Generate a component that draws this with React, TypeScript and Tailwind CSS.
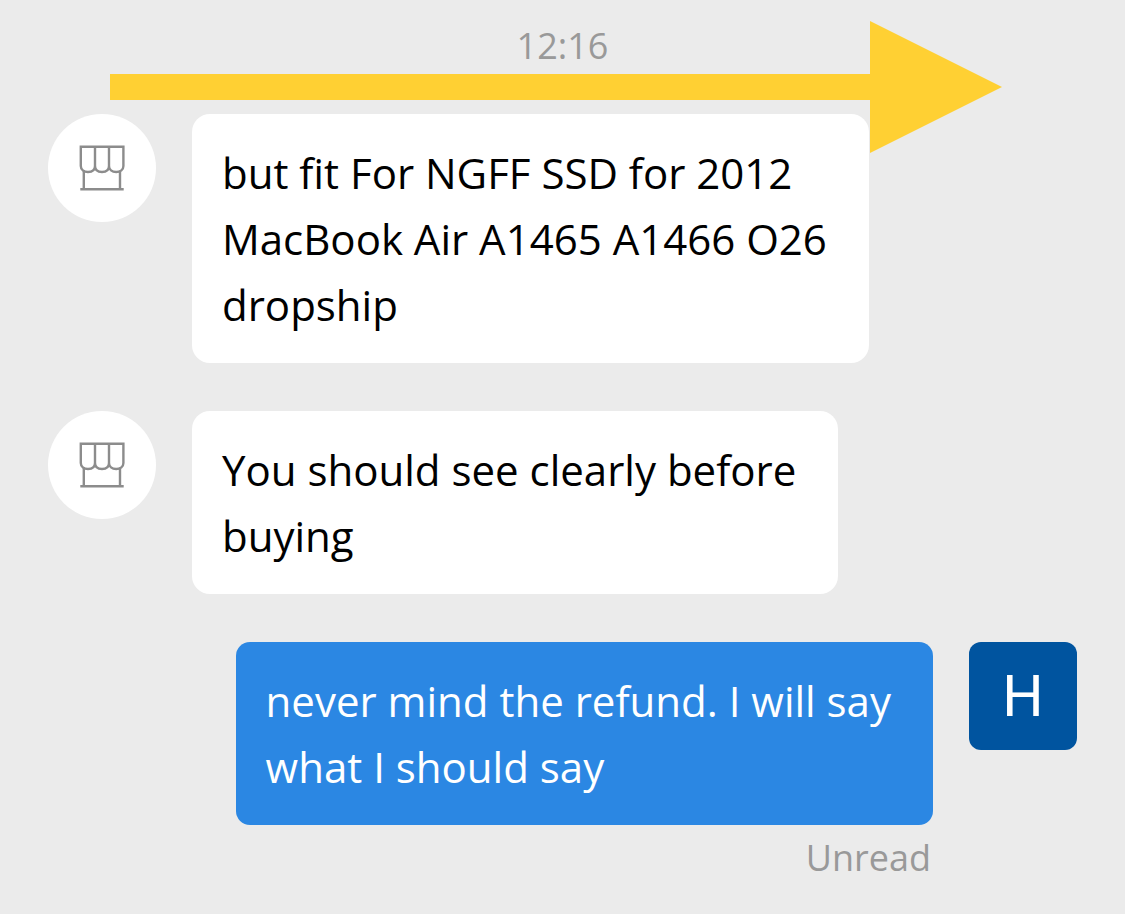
type Message = {
    id: number;
    sender: "store" | "me";
    text: string;
};

const messages: Message[] = [
    { id: 1, sender: "store", text: "but fit For NGFF SSD for 2012\nMacBook Air A1465 A1466 O26\ndropship" },
    { id: 2, sender: "store", text: "You should see clearly before\nbuying" },
    { id: 3, sender: "me", text: "never mind the refund. I will say\nwhat I should say" },
];

function StoreAvatar() {
    return (
        <div className="flex size-27 shrink-0 items-center justify-center rounded-full bg-white">
            <svg viewBox="0 0 48 48" className="size-12" fill="none" stroke="#8c8c8c" strokeWidth="2.4" aria-hidden="true">
                <path d="M2.8 2.7h42.6v19.3c0 3.8-3 6-7.2 6s-7.2-2.2-7.2-6c0 3.8-2.8 6-7 6s-7-2.2-7-6c0 3.8-2.8 6-7 6s-7.2-2.2-7.2-6z" />
                <path d="M17 2.7v19.3M31 2.7v19.3M5.8 26.5v18.5M42 26.5v18.5M2.3 45.3h43.4" />
            </svg>
        </div>
    );
}

function Arrow() {
    return (
        <svg viewBox="0 0 892 132" className="absolute left-[110px] top-[21px] h-[132px] w-[892px]" fill="#ffd033" aria-hidden="true">
            <path d="M0 53h760V0l132 66l-132 66V79H0z" />
        </svg>
    );
}

function MessageRow({ message }: { message: Message }) {
    if (message.sender === "store") {
        return (
            <div className="flex items-start gap-9">
                <StoreAvatar />
                <p className="whitespace-pre-line rounded-[18px] bg-white pb-[25px] pl-[30px] pr-[42px] pt-[26px] text-black">
                    {message.text}
                </p>
            </div>
        );
    }

    return (
        <div className="flex items-start justify-end gap-9">
            <div>
                <p className="whitespace-pre-line rounded-[14px] bg-[#2b87e3] pb-[25px] pl-[30px] pr-[42px] pt-[26px] text-white">
                    {message.text}
                </p>
                <div className="pr-0.5 text-right text-[36px] text-[#999999]">Unread</div>
            </div>
            <div className="flex size-27 shrink-0 items-center justify-center rounded-xl bg-[#00549f] font-[Roboto,sans-serif] text-[58px] text-white">
                H
            </div>
        </div>
    );
}

export default function App() {
    return (
        <main className="relative min-h-screen bg-[#ebebeb] px-12 pt-[13px] font-['Open_Sans',sans-serif] text-[42px] leading-[66px]">
            <time className="block pb-[35px] text-center text-[36px] text-[#999999]">12:16</time>
            <div className="flex flex-col gap-12">
                {messages.map((message) => (
                    <MessageRow key={message.id} message={message} />
                ))}
            </div>
            <Arrow />
        </main>
    );
}
